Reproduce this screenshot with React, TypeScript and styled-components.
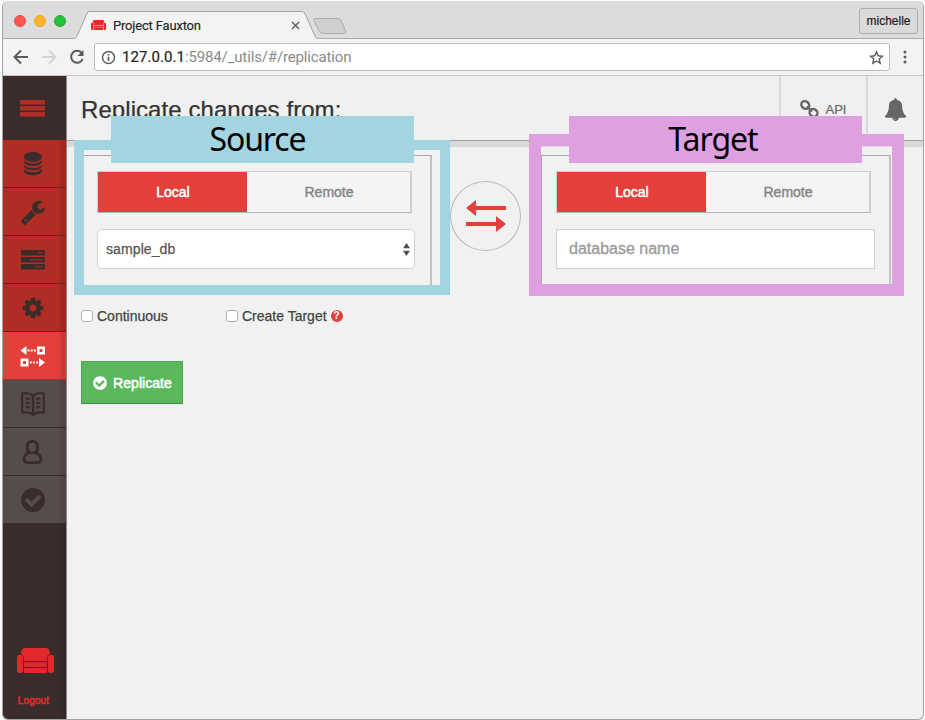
import React from "react";
import styled, { createGlobalStyle, css } from "styled-components";

const GlobalStyle = createGlobalStyle`
  * { box-sizing: border-box; }
  html, body { margin: 0; padding: 0; background: #fbfbfb; }
  body { font-family: "Liberation Sans", Arial, sans-serif; color: #3a3a3a; overflow: hidden; }
  button, input { font-family: inherit; margin: 0; }
`;

const RED = "#e33f3b";
const DARK = "#3a2c2b";
const BLUE = "#a3d5e0";
const PINK = "#dfa0e2";

const Stage = styled.div`
  width: 925px;
  height: 720px;
  padding: 1px 1px 0 2px;
`;

const Window = styled.div`
  height: 719px;
  display: flex;
  flex-direction: column;
  background: #f1f1f1;
  border: solid #a3a3a3;
  border-width: 0 1px 1px;
  border-radius: 6px;
  overflow: hidden;
`;

/* ---------- browser chrome ---------- */

const TabStrip = styled.header`
  flex: none;
  height: 38px;
  display: flex;
  align-items: flex-end;
  background: #dcdcdc;
  border-bottom: 1px solid #ababab;
`;

const Lights = styled.div`
  display: flex;
  gap: 8px;
  width: 71px;
  padding: 3px 0 0 11px;
  height: 37px;
  align-items: center;
`;

const Light = styled.span<{ $color: string; $ring: string }>`
  width: 12px;
  height: 12px;
  border-radius: 50%;
  background: ${(p) => p.$color};
  border: 1px solid ${(p) => p.$ring};
`;

const Tab = styled.div`
  position: relative;
  width: 244px;
  height: 28px;
  margin-bottom: -1px;
  display: flex;
  align-items: center;
  padding: 0 18px 0 17px;
  font: 13px Roboto, sans-serif;
  color: #222;
`;

const TabShape = styled.svg`
  position: absolute;
  left: 0;
  top: 0;
`;

const TabTitle = styled.span`
  position: relative;
  flex: 1;
  margin-left: 7px;
  letter-spacing: -0.18px;
  -webkit-text-stroke: 0.15px #222;
`;

const Layer = styled.span`
  position: relative;
  display: flex;
`;

const NewTab = styled.svg`
  margin: 0 0 3px -6px;
`;

const Profile = styled.button`
  margin: 0 5px 4px auto;
  width: 59px;
  height: 26px;
  padding: 0;
  background: #dadada;
  border: 1px solid #adadad;
  border-radius: 3px;
  font-size: 12px;
  letter-spacing: 0;
  color: #1b1b1b;
  -webkit-text-stroke: 0.2px #1b1b1b;
`;

const Toolbar = styled.nav`
  flex: none;
  height: 37px;
  display: flex;
  align-items: center;
  background: #f3f3f3;
  border-bottom: 1px solid #c4c4c4;
`;

const NavIcons = styled.div`
  display: flex;
  width: 91px;
  padding-left: 9px;
  gap: 10px;
`;

const Address = styled.div`
  width: 796px;
  height: 28px;
  display: flex;
  align-items: center;
  background: #fff;
  border: 1px solid #bdbdbd;
  border-radius: 3px;
  padding: 0 5px 0 6px;
  font: 15px Roboto, sans-serif;
  color: #8a8a8a;
`;

const Url = styled.span`
  flex: 1;
  margin-left: 6px;
  letter-spacing: -0.14px;
`;

const Host = styled.span`
  color: #242424;
  letter-spacing: 0.05px;
  -webkit-text-stroke: 0.2px #242424;
`;

const MenuDots = styled.svg`
  margin-left: 10px;
`;

/* ---------- application ---------- */

const Body = styled.div`
  flex: 1;
  min-height: 0;
  display: flex;
`;

const Sidebar = styled.aside`
  width: 64px;
  flex: none;
  display: flex;
  flex-direction: column;
  background: linear-gradient(to right, transparent 57px, rgba(30, 15, 20, 0.14) 59px) ${DARK};
  border-right: 1px solid #8c8685;
`;

const Burger = styled.div`
  height: 64px;
  display: flex;
  align-items: center;
  justify-content: center;
  padding-right: 5px;
  background: ${DARK};
`;

type Tone = "red" | "active" | "muted";
const tones: Record<Tone, string> = { red: "#af2d24", active: RED, muted: "#564c4a" };
const edges: Record<Tone, string> = { red: "#5e2723", active: "#a1322d", muted: DARK };

const NavItem = styled.a<{ $tone: Tone }>`
  height: 48px;
  display: flex;
  align-items: center;
  justify-content: center;
  padding-right: 3px;
  padding-top: 1px;
  background: linear-gradient(to right, transparent 56px, rgba(40, 10, 30, 0.13) 59px)
    ${(p) => tones[p.$tone]};
  border-bottom: 1px solid ${(p) => edges[p.$tone]};
  color: ${(p) => (p.$tone === "active" ? "#fff" : DARK)};
`;

const Logout = styled.a`
  margin-top: auto;
  display: flex;
  flex-direction: column;
  align-items: center;
  gap: 22px;
  padding: 0 0 12px 1px;
  color: #e02e2b;
  font-size: 10px;
  line-height: 12px;
  letter-spacing: 0.15px;
  -webkit-text-stroke: 0.5px #e02e2b;
`;

const LogoutText = styled.span`
  margin-left: -3px;
`;

const Main = styled.main`
  flex: 1;
  display: flex;
  flex-direction: column;
`;

const PageHeader = styled.header`
  height: 65px;
  display: flex;
  background: #f0f0f0;
  border-bottom: 1px solid #9e9e9e;
`;

const Title = styled.h1`
  flex: 1;
  margin: 0;
  padding: 19px 0 0 14px;
  font-size: 24px;
  line-height: 30px;
  font-weight: 400;
  letter-spacing: 0.07px;
  color: #333;
  -webkit-text-stroke: 0.25px #333;
`;

const HeaderCell = styled.div<{ $width: number }>`
  width: ${(p) => p.$width}px;
  border-left: 2px solid #d9d9d9;
  display: flex;
  align-items: center;
  justify-content: center;
  gap: 7px;
  padding: 2px 1px 0 0;
  font-size: 13px;
  color: #666;
  -webkit-text-stroke: 0.2px #666;
`;

const HeaderShade = styled.div`
  height: 6px;
  background: #d9d9d9;
`;

const Panels = styled.div`
  display: flex;
  height: 148px;
  padding-left: 7px;
`;

const Panel = styled.section<{ $kind: "source" | "target" }>`
  position: relative;
  display: flex;
  flex-direction: column;
  gap: 16px;
  margin-top: -7px;
  ${(p) =>
    p.$kind === "source"
      ? css`
          width: 376px;
          padding: 31px 35px 0 23px;
        `
      : css`
          width: 375px;
          margin-left: 79px;
          padding: 31px 28px 0 27px;
        `}
`;

const Fieldset = styled.div<{ $kind: "source" | "target" }>`
  position: absolute;
  top: 15px;
  bottom: 0;
  left: ${(p) => (p.$kind === "source" ? 0 : 12)}px;
  right: ${(p) => (p.$kind === "source" ? 18 : 13)}px;
  border: 1px solid #aaa5a5;
  border-right: 2px solid #c5c1c1;
`;

const Frame = styled.div<{ $kind: "source" | "target" }>`
  position: absolute;
  inset: 0;
  bottom: auto;
  height: 155px;
  ${(p) =>
    p.$kind === "source"
      ? css`
          border: 10px solid ${BLUE};
        `
      : css`
          top: -6px;
          height: 162px;
          border: 12px solid ${PINK};
        `}
`;

const FrameLabel = styled.div<{ $kind: "source" | "target" }>`
  position: absolute;
  top: -24px;
  height: 47px;
  font: 32px/45px "Noto Sans", sans-serif;
  text-align: center;
  color: #000;
  ${(p) =>
    p.$kind === "source"
      ? css`
          left: 37px;
          width: 303px;
          background: ${BLUE};
          padding-right: 10px;
          letter-spacing: -1.1px;
        `
      : css`
          left: 40px;
          width: 293px;
          background: ${PINK};
          padding-right: 5px;
          letter-spacing: -1px;
        `}
`;

const Toggle = styled.div`
  position: relative;
  display: flex;
  height: 42px;
  width: 315px;
  border: solid #cfcfcf;
  border-width: 1px 2px 1px 1px;
  border-bottom-color: #b5b5b5;
`;

const Choice = styled.button<{ $on?: boolean }>`
  border: 0;
  padding: 0 0 0 1px;
  font-size: 14px;
  width: ${(p) => (p.$on ? "149px" : "auto")};
  flex: ${(p) => (p.$on ? "none" : "1")};
  background: ${(p) => (p.$on ? RED : "#f4f4f4")};
  color: ${(p) => (p.$on ? "#fff" : "#858585")};
  -webkit-text-stroke: ${(p) => (p.$on ? "0.5px #fff" : "0.4px #858585")};
`;

const SelectBox = styled.div`
  position: relative;
  display: flex;
  align-items: center;
  justify-content: space-between;
  width: 318px;
  height: 40px;
  padding: 0 4px 0 8px;
  background: #fff;
  border: 1px solid #d0d0d0;
  border-radius: 5px;
  font-size: 14px;
  color: #555;
  letter-spacing: 0.1px;
  -webkit-text-stroke: 0.25px #555;
`;

const NameInput = styled.input`
  position: relative;
  width: 319px;
  height: 40px;
  padding: 0 12px;
  background: #fff;
  border: 1px solid #d0d0d0;
  font-size: 16px;
  &::placeholder {
    color: #999;
    opacity: 1;
    -webkit-text-stroke: 0.3px #999;
  }
`;

const Swap = styled.button`
  position: absolute;
  left: 376px;
  top: 41px;
  width: 71px;
  height: 70px;
  padding: 0;
  display: flex;
  align-items: center;
  justify-content: center;
  border: 1px solid #bdb8b8;
  border-radius: 50%;
  background: transparent;
`;

const Options = styled.div`
  display: flex;
  margin-top: 13px;
  padding-left: 14px;
  height: 16px;
`;

const Option = styled.label<{ $width: number }>`
  width: ${(p) => p.$width}px;
  display: flex;
  align-items: center;
  gap: 4px;
  white-space: nowrap;
  font-size: 14px;
  color: #444;
  -webkit-text-stroke: 0.25px #444;
`;

const Check = styled.span`
  flex: none;
  width: 12px;
  height: 12px;
  background: #fff;
  border: 1px solid #b3b3b3;
  border-radius: 3px;
`;

const Help = styled.span`
  flex: none;
  width: 12px;
  height: 12px;
  border-radius: 50%;
  background: ${RED};
  color: #fff;
  font: bold 10px/12px "Liberation Sans", sans-serif;
  text-align: center;
  -webkit-text-stroke: 0;
`;

const Replicate = styled.button`
  width: 102px;
  height: 43px;
  margin: 37px 0 0 14px;
  padding: 0;
  display: flex;
  align-items: center;
  justify-content: center;
  gap: 5px;
  background: #5bb75b;
  border: 1px solid #51a351;
  border-bottom-color: #3e8f3e;
  color: #fff;
  font-size: 14px;
  letter-spacing: 0.05px;
  -webkit-text-stroke: 0.55px #fff;
`;

/* ---------- icons ---------- */

const Glyph = ({ d, size, fill = "currentColor" }: { d: string; size: number; fill?: string }) => (
  <svg width={size} height={size} viewBox="0 0 1792 1792" fill={fill}>
    <path d={d} />
  </svg>
);

const WRENCH =
  "M448 1472q0-26-19-45t-45-19-45 19-19 45 19 45 45 19 45-19 19-45zm644-420l-682 682q-37 37-90 37-52 0-91-37l-106-108q-38-36-38-90 0-53 38-91l681-681q39 98 114.5 173.5t173.5 114.5zm634-435q0 39-23 106-47 134-164.5 217.5t-258.5 83.5q-185 0-316.5-131.5t-131.5-316.5 131.5-316.5 316.5-131.5q58 0 121.5 16.5t107.5 46.5q16 11 16 28t-16 28l-293 169v224l193 107q5-3 79-48.5t135.5-81 70.5-35.5q15 0 23.5 10t8.5 25z";
const COG =
  "M1152 896q0-106-75-181t-181-75-181 75-75 181 75 181 181 75 181-75 75-181zm512-109v222q0 12-8 23t-20 13l-185 28q-19 54-39 91 35 50 107 138 10 12 10 25t-9 23q-27 37-99 108t-94 71q-12 0-26-9l-138-108q-44 23-91 38-16 136-29 186-7 28-36 28h-222q-14 0-24.5-8.5t-11.5-21.5l-28-184q-49-16-90-37l-141 107q-10 9-25 9-14 0-25-11-126-114-165-168-7-10-7-23 0-12 8-23 15-21 51-66.5t54-70.5q-27-50-41-99l-183-27q-13-2-21-12.5t-8-23.5v-222q0-12 8-23t19-13l186-28q14-46 39-92-40-57-107-138-10-12-10-24 0-10 9-23 26-36 98.5-107.5t94.5-71.5q13 0 26 10l138 107q44-23 91-38 16-136 29-186 7-28 36-28h222q14 0 24.5 8.5t11.5 21.5l28 184q49 16 90 37l142-107q9-9 24-9 13 0 25 10 129 119 165 170 7 8 7 22 0 12-8 23-15 21-51 66.5t-54 70.5q26 50 41 98l183 28q13 2 21 12.5t8 23.5z";
const BELL =
  "M912 1696q0-16-16-16-59 0-101.5-42.5t-42.5-101.5q0-16-16-16t-16 16q0 73 51.5 124.5t124.5 51.5q16 0 16-16zm816-288q0 52-38 90t-90 38h-448q0 106-75 181t-181 75-181-75-75-181h-448q-52 0-90-38t-38-90q50-42 91-88t85-119.5 74.5-158.5 50-206 19.5-260q0-152 117-282.5t307-158.5q-8-19-8-39 0-40 28-68t68-28 68 28 28 68q0 20-8 39 190 28 307 158.5t117 282.5q0 139 19.5 260t50 206 74.5 158.5 85 119.5 91 88z";
const CHECK_CIRCLE =
  "M1412 734q0-28-18-46l-91-90q-19-19-45-19t-45 19l-408 407-226-226q-19-19-45-19t-45 19l-91 90q-18 18-18 46 0 27 18 45l362 362q19 19 45 19 27 0 46-19l543-543q18-18 18-45zm252 162q0 209-103 385.5t-279.5 279.5-385.5 103-385.5-103-279.5-279.5-103-385.5 103-385.5 279.5-279.5 385.5-103 385.5 103 279.5 279.5 103 385.5z";

const Couch = ({ width, height, fill }: { width: number; height: number; fill: string }) => (
  <svg width={width} height={height} viewBox="0 0 37 24" preserveAspectRatio="none" fill={fill}>
    <path d="M4 5.500C4 2 5.500 0 9 0h19c3.500 0 5 2 5 5.500C31 6.500 30.300 7.500 30.300 9v3.500H6.700V9C6.700 7.500 6 6.500 4 5.500z" />
    <rect x="0" y="6.500" width="6" height="17.500" rx="2.700" />
    <rect x="31" y="6.500" width="6" height="17.500" rx="2.700" />
    <rect x="7" y="13.700" width="23" height="4.600" rx="1" />
    <rect x="7" y="19.300" width="23" height="4.700" rx="1" />
  </svg>
);

const BurgerIcon = () => (
  <svg width="25" height="17" fill="#b02d25">
    <rect width="25" height="4.500" />
    <rect y="6" width="25" height="4.500" />
    <rect y="12" width="25" height="4.500" />
  </svg>
);

const DatabaseIcon = () => (
  <svg width="20" height="26" viewBox="0 0 20 26" fill="currentColor">
    <ellipse cx="10" cy="6" rx="9" ry="5" />
    <path d="M1 8.800c1.500 5 16.500 5 18 0v1.800c0 5.700-18 5.700-18 0z" />
    <path d="M1 13.200c1.500 5 16.500 5 18 0v1.800c0 5.700-18 5.700-18 0z" />
    <path d="M1 17.600c1.500 5 16.500 5 18 0v2.200c0 6-18 6-18 0z" />
  </svg>
);

const TasksIcon = () => (
  <svg width="26" height="20" viewBox="0 0 26 20">
    <g fill="currentColor">
      <rect x="1" width="24" height="5.500" rx="1" />
      <rect x="1" y="7" width="24" height="5.500" rx="1" />
      <rect x="1" y="14" width="24" height="5.500" rx="1" />
    </g>
    <g fill="#8d2a23">
      <rect x="18" y="2" width="5.500" height="1.500" />
      <rect x="9.500" y="9" width="14" height="1.500" />
      <rect x="15" y="16" width="8.500" height="1.500" />
    </g>
  </svg>
);

const ReplicationIcon = () => (
  <svg width="26" height="21" viewBox="0 0 26 21" fill="#fff">
    <path d="M0.500 4.500l6-4.500v9z" />
    <path d="M7.500 3.500h2v2h-2zM10.700 3.500h2v2h-2zM13.900 3.500h2v2h-2z" />
    <path d="M17 .5h8v8h-8zM19.500 3v3h3V3z" fillRule="evenodd" />
    <path d="M0.500 12.500h8v8h-8zM3 15v3h3v-3z" fillRule="evenodd" />
    <path d="M9.700 15.500h2v2h-2zM12.900 15.500h2v2h-2zM16.100 15.500h2v2h-2z" />
    <path d="M25 16.500l-6-4.500v9z" />
  </svg>
);

const BookIcon = () => (
  <svg width="26" height="26" viewBox="0 0 26 26" fill="none" stroke="currentColor" strokeWidth="2.200" strokeLinejoin="round">
    <path d="M13 4.500C10.500 2.300 6 1.800 2.200 2.500v19c4-.4 8.500-.2 10.800 2.500 2.300-2.700 6.800-2.900 10.800-2.500v-19C20 1.800 15.500 2.300 13 4.500z" />
    <path d="M13 4.500V24" strokeWidth="2.600" />
    <path d="M5.500 7.500c1.500 0 3 .2 4.300 1M5.500 11.700c1.500 0 3 .2 4.300 1M5.500 15.900c1.500 0 3 .2 4.300 1M20.500 7.500c-1.500 0-3 .2-4.300 1M20.500 11.700c-1.500 0-3 .2-4.300 1M20.500 15.900c-1.500 0-3 .2-4.300 1" />
  </svg>
);

const UserIcon = () => (
  <svg width="22" height="26" viewBox="0 0 20 26" preserveAspectRatio="none" fill="none" stroke="currentColor" strokeWidth="2.700">
    <path d="M6.800 13.500C3.800 10.500 3.700 2.400 9.500 2.400s5.700 8.100 2.700 11.100c2.500 1.200 5 2.800 5 6.500 0 2.200-1.200 3.600-3 3.600H4.800c-1.800 0-3-1.400-3-3.600 0-3.700 2.500-5.300 5-6.500z" />
    <path d="M6.800 13.800h5.400" strokeWidth="2" />
  </svg>
);

const LinkIcon = () => (
  <svg width="19" height="18" viewBox="0 0 19 18" fill="none" stroke="#666" strokeWidth="2.400">
    <ellipse cx="5.300" cy="5" rx="4.200" ry="3.600" transform="rotate(40 5.300 5)" />
    <ellipse cx="13.500" cy="12.800" rx="4.200" ry="3.600" transform="rotate(40 13.500 12.800)" />
    <path d="M6.800 6.500l5.300 5" strokeWidth="2" />
  </svg>
);

const SwapIcon = () => (
  <svg width="40" height="32" viewBox="0 0 40 32" fill={RED}>
    <path d="M0 8L10 0v6H40v4H10V16z" />
    <path d="M40 24l-10-8v6H0v4h30V32z" />
  </svg>
);

const navItems: { tone: Tone; icon: React.ReactNode }[] = [
  { tone: "red", icon: <DatabaseIcon /> },
  { tone: "red", icon: <Glyph d={WRENCH} size={26} /> },
  { tone: "red", icon: <TasksIcon /> },
  { tone: "red", icon: <Glyph d={COG} size={24} /> },
  { tone: "active", icon: <ReplicationIcon /> },
  { tone: "muted", icon: <BookIcon /> },
  { tone: "muted", icon: <UserIcon /> },
  { tone: "muted", icon: <Glyph d={CHECK_CIRCLE} size={28} /> },
];

const LocationToggle = () => (
  <Toggle>
    <Choice $on>Local</Choice>
    <Choice>Remote</Choice>
  </Toggle>
);

export default function App() {
  return (
    <Stage>
      <GlobalStyle />
      <Window>
        <TabStrip>
          <Lights>
            <Light $color="#fc5650" $ring="#ee4b46" />
            <Light $color="#fdb32b" $ring="#eca321" />
            <Light $color="#26c13b" $ring="#1fae32" />
          </Lights>
          <Tab>
            <TabShape width="244" height="28" viewBox="0 0 244 28">
              <path d="M0 28L2.500 26 14 .5H230L241 26 244 28z" fill="#f3f3f3" />
              <path d="M0 27.500Q2 27 3 25L14 .5H228.500Q230 .5 231 3L241 25Q242 27.500 244 27.500" fill="none" stroke="#a5a5a5" />
            </TabShape>
            <Layer>
              <Couch width={15} height={10} fill="#e5282b" />
            </Layer>
            <TabTitle>Project Fauxton</TabTitle>
            <Layer>
              <svg width="9" height="9" stroke="#666" strokeWidth="1.600">
                <path d="M1 1l7 7M8 1L1 8" />
              </svg>
            </Layer>
          </Tab>
          <NewTab width="36" height="18" viewBox="0 0 36 18">
            <path d="M2.500 1.500H26Q28 1.500 29 3.500L33.500 14Q34 16.500 32 16.500H10.500Q8.500 16.500 7.500 14.500L2 3.500Q1 1.500 2.500 1.500z" fill="#d0d0d0" stroke="#ababab" />
          </NewTab>
          <Profile>michelle</Profile>
        </TabStrip>
        <Toolbar>
          <NavIcons>
            <svg width="18" height="18" fill="none" stroke="#5a5a5a" strokeWidth="2">
              <path d="M16 9H3M9 2.500L2.500 9 9 15.500" />
            </svg>
            <svg width="18" height="18" fill="none" stroke="#d3d3d3" strokeWidth="2">
              <path d="M2 9H15M9 2.500L15.500 9 9 15.500" />
            </svg>
            <svg width="18" height="18" fill="none" stroke="#5a5a5a" strokeWidth="2">
              <path d="M13.800 5A6 6 0 1 0 14.700 11" />
              <path d="M15.500 2v6h-6z" fill="#5a5a5a" stroke="none" />
            </svg>
          </NavIcons>
          <Address>
            <svg width="15" height="15" fill="none" stroke="#5c5c5c" strokeWidth="1.500">
              <circle cx="7.500" cy="7.500" r="6" />
              <path d="M7.500 6.700v4.300M7.500 4v1.600" strokeWidth="1.700" />
            </svg>
            <Url>
              <Host>127.0.0.1</Host>:5984/_utils/#/replication
            </Url>
            <svg width="15" height="15" viewBox="0 0 15 15" fill="none" stroke="#5c5c5c" strokeWidth="1.400">
              <path d="M7.500 1.800l1.700 4 4.300.4-3.300 2.800 1 4.200-3.700-2.200-3.700 2.200 1-4.200L1.500 6.200l4.300-.4z" />
            </svg>
          </Address>
          <MenuDots width="10" height="14" fill="#5c5c5c">
            <circle cx="5" cy="2" r="1.500" />
            <circle cx="5" cy="7" r="1.500" />
            <circle cx="5" cy="12" r="1.500" />
          </MenuDots>
        </Toolbar>
        <Body>
          <Sidebar>
            <Burger>
              <BurgerIcon />
            </Burger>
            {navItems.map((item, i) => (
              <NavItem key={i} $tone={item.tone}>
                {item.icon}
              </NavItem>
            ))}
            <Logout>
              <Couch width={37} height={25} fill="#e3282b" />
              <LogoutText>Logout</LogoutText>
            </Logout>
          </Sidebar>
          <Main>
            <PageHeader>
              <Title>Replicate changes from:</Title>
              <HeaderCell $width={87}>
                <LinkIcon />
                API
              </HeaderCell>
              <HeaderCell $width={57}>
                <Glyph d={BELL} size={23} fill="#666" />
              </HeaderCell>
            </PageHeader>
            <HeaderShade />
            <Panels>
              <Panel $kind="source">
                <Fieldset $kind="source" />
                <LocationToggle />
                <SelectBox>
                  sample_db
                  <svg width="7" height="13" fill="#505050">
                    <path d="M0 5.300L3.500 0 7 5.300zM0 7.700L3.500 13 7 7.700z" />
                  </svg>
                </SelectBox>
                <Frame $kind="source" />
                <FrameLabel $kind="source">Source</FrameLabel>
                <Swap>
                  <SwapIcon />
                </Swap>
              </Panel>
              <Panel $kind="target">
                <Fieldset $kind="target" />
                <LocationToggle />
                <NameInput placeholder="database name" />
                <Frame $kind="target" />
                <FrameLabel $kind="target">Target</FrameLabel>
              </Panel>
            </Panels>
            <Options>
              <Option $width={145}>
                <Check />
                Continuous
              </Option>
              <Option $width={130}>
                <Check />
                Create Target
                <Help>?</Help>
              </Option>
            </Options>
            <Replicate>
              <Glyph d={CHECK_CIRCLE} size={16} />
              Replicate
            </Replicate>
          </Main>
        </Body>
      </Window>
    </Stage>
  );
}
